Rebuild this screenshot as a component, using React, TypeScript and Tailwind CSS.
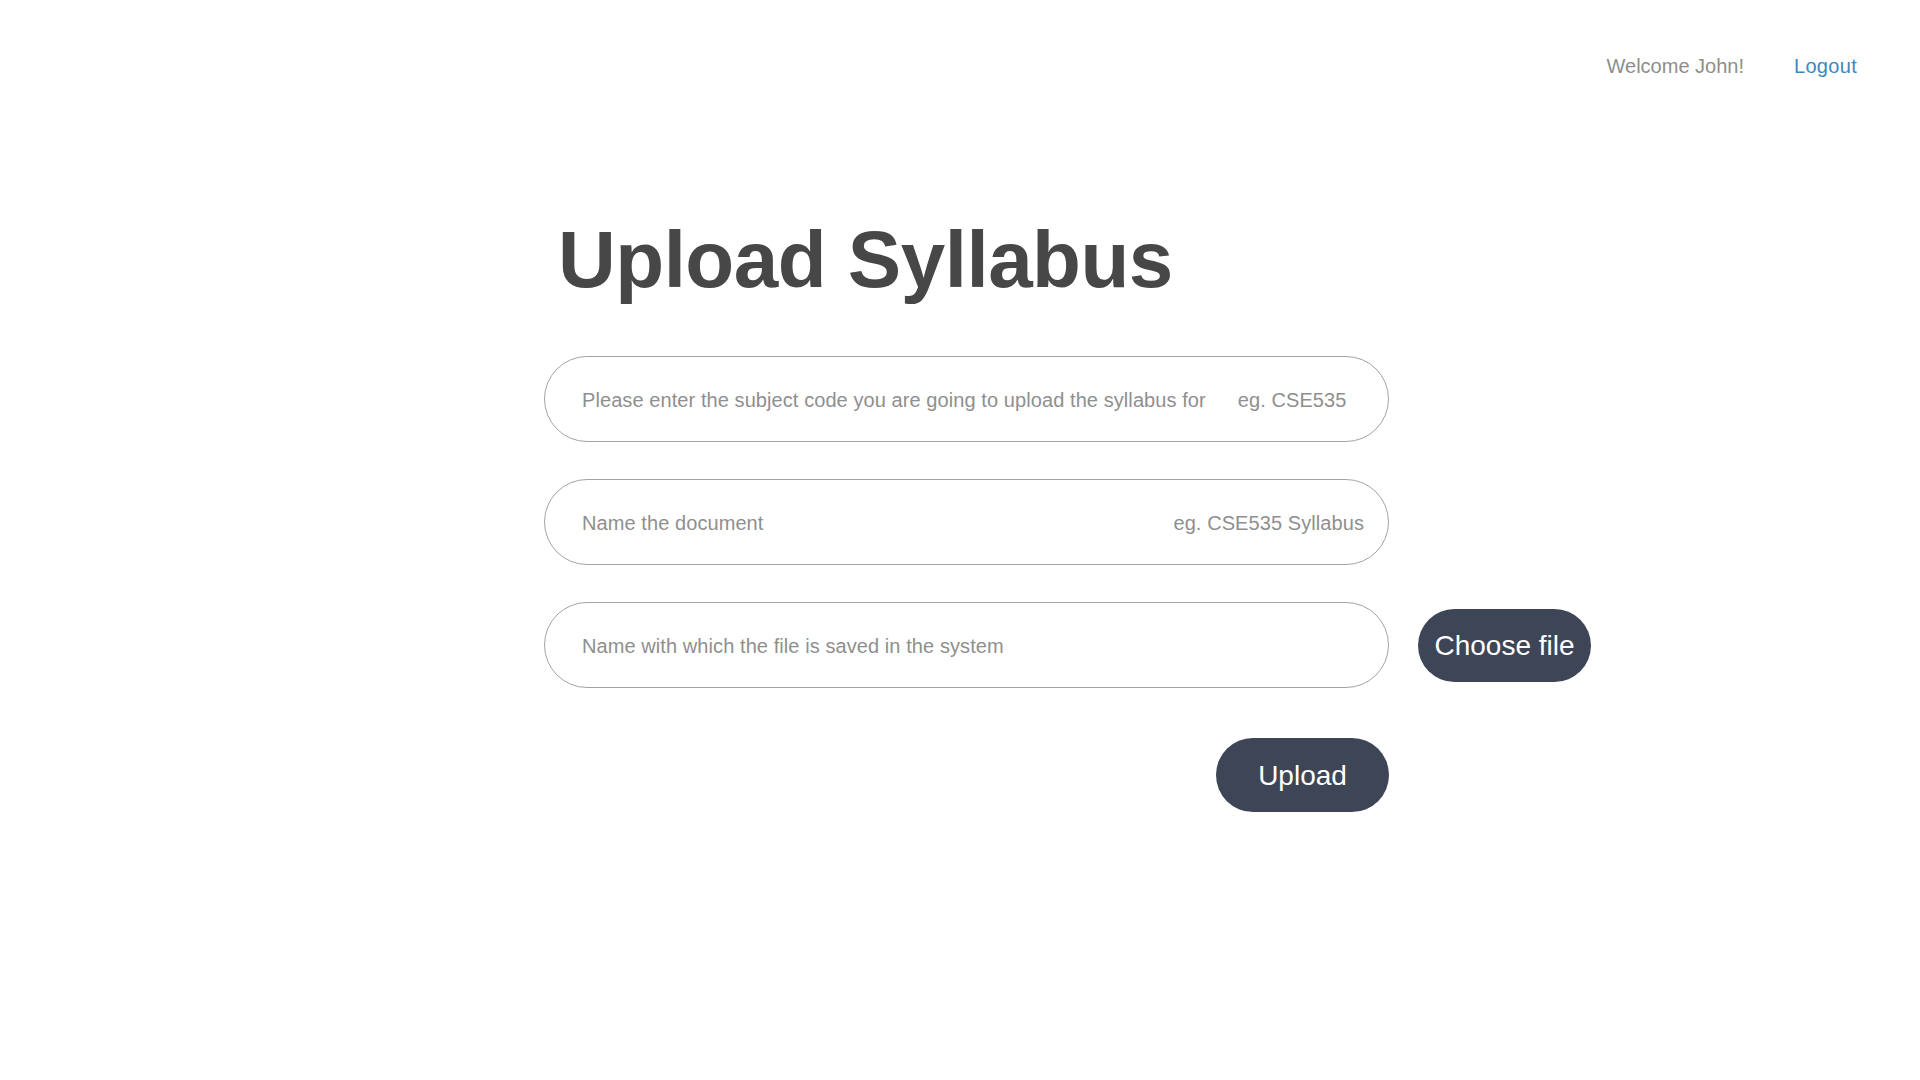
import React from "react";

const font = { fontFamily: '"Liberation Sans", Arial, Helvetica, sans-serif' };

function Field({ children, className = "" }: { children: React.ReactNode; className?: string }) {
  return (
    <div
      className={
        "flex h-[86px] w-[845px] shrink-0 items-center rounded-full border border-[#a3a3a3] bg-white pl-[37px] pt-[2px] text-[20px] tracking-[0.08px] text-[#8f8f8f] " +
        className
      }
    >
      {children}
    </div>
  );
}

export default function App() {
  return (
    <div className="min-h-screen w-full bg-white" style={font}>
      <header className="flex justify-end gap-[50px] pr-[63px] pt-[54px] text-[20px] leading-[24px]">
        <span className="text-[#8e8e8e]">Welcome John!</span>
        <a href="#" className="tracking-[0.3px] text-[#3d88c0]">
          Logout
        </a>
      </header>

      <main className="ml-[544px] mt-[142px] flex flex-col">
        <h1 className="ml-[14px] text-[80px] font-bold leading-[80px] tracking-[-0.5px] text-[#474747]">
          Upload Syllabus
        </h1>

        <div className="mt-[56px] flex flex-col gap-[37px]">
          <Field>
            <span>Please enter the subject code you are going to upload the syllabus for</span>
            <span className="ml-[32px]">eg. CSE535</span>
          </Field>

          <Field className="justify-between pr-[24px]">
            <span>Name the document</span>
            <span>eg. CSE535 Syllabus</span>
          </Field>

          <div className="flex items-center gap-[29px]">
            <Field>
              <span>Name with which the file is saved in the system</span>
            </Field>
            <button className="flex h-[73px] w-[173px] items-center justify-center rounded-full bg-[#3d4557] pt-[2px] text-[28px] text-white">
              Choose file
            </button>
          </div>
        </div>

        <div className="mt-[50px] flex w-[845px] justify-end">
          <button className="flex h-[74px] w-[173px] items-center justify-center rounded-full bg-[#3d4557] pt-[2px] text-[28px] text-white">
            Upload
          </button>
        </div>
      </main>
    </div>
  );
}
